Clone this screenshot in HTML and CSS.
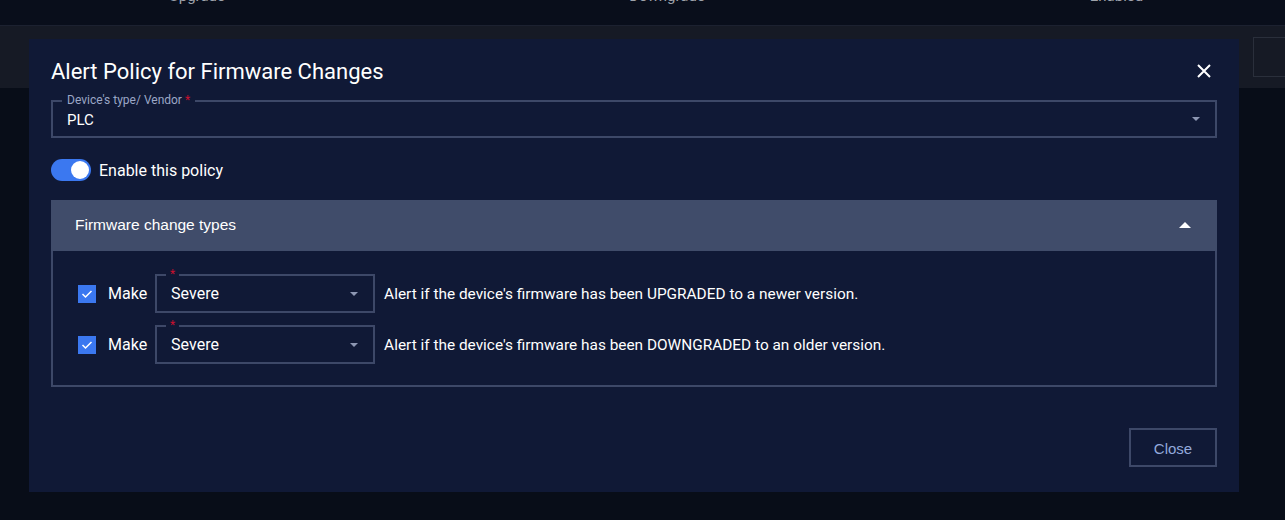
FILE: index.html
```html
<!DOCTYPE html>
<html lang="en">
<head>
    <meta charset="UTF-8">
    <meta name="viewport" content="width=device-width, initial-scale=1.0">
    <title>Alert Policy for Firmware Changes</title>
    <link rel="stylesheet" href="styles.css">
</head>
<body>
  <!-- page behind the dialog -->
  <div class="page">
    <div class="table-head">
      <span>Upgrade</span>
      <span>Downgrade</span>
      <span>Enabled</span>
    </div>
    <div class="toolbar">
      <button class="ghost-btn"></button>
    </div>
  </div>

  <!-- dialog -->
  <div class="modal">
    <div class="modal-head">
      <h1>Alert Policy for Firmware Changes</h1>
      <button class="icon-btn" aria-label="Close">
        <svg width="14" height="14" viewBox="0 0 14 14"><path d="M1 1L13 13M13 1L1 13" stroke="#fff" stroke-width="2" fill="none"/></svg>
      </button>
    </div>

    <div class="field">
      <span class="field-label">Device's type/ Vendor <b class="req">*</b></span>
      <span class="field-value">PLC</span>
      <span class="caret"></span>
    </div>

    <div class="switch-row">
      <span class="switch"><span class="knob"></span></span>
      <span>Enable this policy</span>
    </div>

    <div class="panel">
      <div class="panel-head">
        <span>Firmware change types</span>
        <span class="caret-up"></span>
      </div>
      <div class="panel-body">
        <div class="rule-row">
          <span class="check">
            <svg width="12" height="10" viewBox="0 0 12 10"><path d="M1.5 5L4.5 8L10.5 2" stroke="#fff" stroke-width="1.5" fill="none"/></svg>
          </span>
          <span class="make">Make</span>
          <div class="select">
            <b class="req notch">*</b>
            <span>Severe</span>
            <span class="caret"></span>
          </div>
          <span class="desc">Alert if the device's firmware has been UPGRADED to a newer version.</span>
        </div>
        <div class="rule-row">
          <span class="check">
            <svg width="12" height="10" viewBox="0 0 12 10"><path d="M1.5 5L4.5 8L10.5 2" stroke="#fff" stroke-width="1.5" fill="none"/></svg>
          </span>
          <span class="make">Make</span>
          <div class="select">
            <b class="req notch">*</b>
            <span>Severe</span>
            <span class="caret"></span>
          </div>
          <span class="desc">Alert if the device's firmware has been DOWNGRADED to an older version.</span>
        </div>
      </div>
    </div>

    <div class="modal-foot">
      <button class="btn-close">Close</button>
    </div>
  </div>
</body>
</html>
```

FILE: styles.css
```css
body {
    margin: 0;
    width: 1285px;
    height: 520px;
    overflow: hidden;
    background-color: #080d18;
    font-family: Roboto, "Noto Sans", sans-serif;
    color: #fff;
    position: relative;
}

/* background page */
.table-head {
    height: 25px;
    background-color: #090e1b;
    border-bottom: 1px solid #1c2130;
    display: grid;
    grid-template-columns: 394px 546px 1fr;
    color: #9ea2ab;
    font-size: 15px;
    line-height: 16px;
    text-align: center;
    overflow: hidden;
}
.table-head span {
    margin-top: -12px;
}
.table-head span:last-child {
    padding-left: 8px;
}
.toolbar {
    height: 62px;
    box-sizing: border-box;
    padding-top: 11px;
    background-color: #161a25;
    display: flex;
    justify-content: flex-end;
    overflow: hidden;
}
.ghost-btn {
    width: 40px;
    height: 40px;
    margin-right: -8px;
    border: 1px solid #2a2f3b;
    background: transparent;
}

/* dialog */
.modal {
    position: absolute;
    top: 39px;
    left: 29px;
    width: 1210px;
    height: 453px;
    box-sizing: border-box;
    padding: 18px 22px 25px;
    background-color: #101936;
    display: flex;
    flex-direction: column;
}
.modal-head {
    display: flex;
    justify-content: space-between;
    align-items: center;
    height: 28px;
}
.modal-head h1 {
    margin: 0;
    font-size: 22px;
    font-weight: 400;
    line-height: 28px;
    padding-top: 2px;
}
.icon-btn {
    width: 24px;
    height: 24px;
    padding: 0;
    margin-right: 1px;
    border: none;
    background: none;
    display: flex;
    align-items: center;
    justify-content: center;
}

.req {
    color: #c8102e;
    font-weight: 400;
}

.field {
    position: relative;
    margin-top: 15px;
    height: 38px;
    box-sizing: border-box;
    border: 2px solid #3d4868;
    padding: 0 15px 0 14px;
    display: flex;
    align-items: center;
    justify-content: space-between;
}
.field-label {
    position: absolute;
    top: -9px;
    left: 9px;
    padding: 0 5px;
    background-color: #101936;
    font-size: 12px;
    line-height: 14px;
    color: #9ba7c6;
}
.field-value {
    font-size: 15px;
    padding-top: 1px;
}
.caret {
    width: 0;
    height: 0;
    border-left: 4px solid transparent;
    border-right: 4px solid transparent;
    border-top: 4px solid #8d97b3;
}

.switch-row {
    margin-top: 21px;
    height: 22px;
    display: flex;
    align-items: center;
    gap: 8px;
    font-size: 16px;
}
.switch {
    width: 40px;
    height: 22px;
    border-radius: 11px;
    background-color: #3b78f0;
    display: flex;
    align-items: center;
    justify-content: flex-end;
    padding-right: 2px;
    box-sizing: border-box;
}
.knob {
    width: 18px;
    height: 18px;
    border-radius: 50%;
    background-color: #fff;
}

.panel {
    margin-top: 19px;
}
.panel-head {
    height: 51px;
    box-sizing: border-box;
    background-color: #404c6a;
    display: flex;
    align-items: center;
    justify-content: space-between;
    padding: 0 26px 2px 24px;
    font-family: "Liberation Sans", Arial, sans-serif;
    font-size: 15.5px;
}
.caret-up {
    width: 0;
    height: 0;
    border-left: 6px solid transparent;
    border-right: 6px solid transparent;
    border-bottom: 6px solid #fff;
}
.panel-body {
    border: 2px solid #3d4868;
    border-top: none;
    padding: 23px 25px 21px;
    display: flex;
    flex-direction: column;
    gap: 12px;
}
.rule-row {
    height: 39px;
    display: flex;
    align-items: center;
    font-size: 16px;
}
.check {
    width: 18px;
    height: 18px;
    background-color: #3b78f0;
    display: flex;
    align-items: center;
    justify-content: center;
}
.make {
    margin-left: 12px;
}
.select {
    position: relative;
    margin-left: 8px;
    width: 220px;
    height: 39px;
    box-sizing: border-box;
    border: 2px solid #3d4868;
    padding: 0 15px 0 14px;
    display: flex;
    align-items: center;
    justify-content: space-between;
}
.notch {
    position: absolute;
    top: -9px;
    left: 9px;
    padding: 0 4px;
    background-color: #101936;
    font-size: 12px;
    line-height: 14px;
}
.desc {
    margin-left: 9px;
    font-size: 15.4px;
}

.modal-foot {
    margin-top: 41px;
    display: flex;
    justify-content: flex-end;
}
.btn-close {
    width: 88px;
    height: 39px;
    border: 2px solid #3d4868;
    background: transparent;
    color: #93a9dc;
    font-family: "Liberation Sans", Arial, sans-serif;
    font-size: 15px;
    padding-top: 2px;
}
```
